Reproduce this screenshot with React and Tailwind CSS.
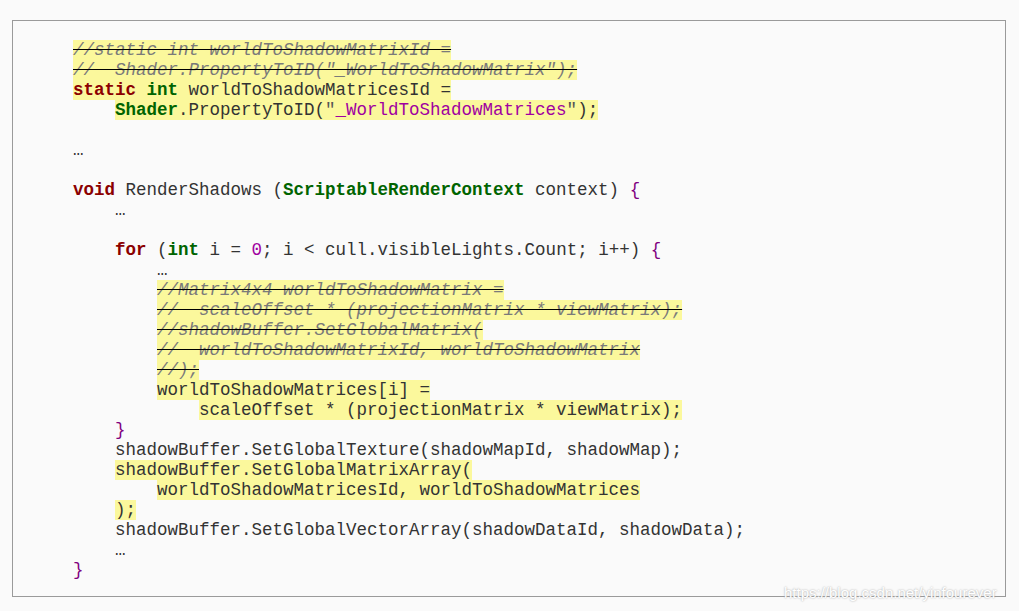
import React from 'react'

// segment kinds: n plain, k keyword, t type, s string, q quote, b brace, c comment
const LINES = [
  { ind: 0, hl: true, segs: [['//static int worldToShadowMatrixId =', 'c']] },
  { ind: 0, hl: true, segs: [['//  Shader.PropertyToID("_WorldToShadowMatrix");', 'c']] },
  { ind: 0, hl: true, segs: [['static', 'k'], [' ', 'n'], ['int', 't'], [' worldToShadowMatricesId =', 'n']] },
  { ind: 1, hl: true, segs: [['Shader', 't'], ['.PropertyToID(', 'n'], ['"', 'q'], ['_WorldToShadowMatrices', 's'], ['"', 'q'], [');', 'n']] },
  { ind: 0, segs: [] },
  { ind: 0, segs: [['…', 'n']] },
  { ind: 0, segs: [] },
  { ind: 0, segs: [['void', 'k'], [' RenderShadows (', 'n'], ['ScriptableRenderContext', 't'], [' context) ', 'n'], ['{', 'b']] },
  { ind: 1, segs: [['…', 'n']] },
  { ind: 0, segs: [] },
  { ind: 1, segs: [['for', 'k'], [' (', 'n'], ['int', 't'], [' i = ', 'n'], ['0', 's'], ['; i < cull.visibleLights.Count; i++) ', 'n'], ['{', 'b']] },
  { ind: 2, segs: [['…', 'n']] },
  { ind: 2, hl: true, segs: [['//Matrix4x4 worldToShadowMatrix =', 'c']] },
  { ind: 2, hl: true, segs: [['//  scaleOffset * (projectionMatrix * viewMatrix);', 'c']] },
  { ind: 2, hl: true, segs: [['//shadowBuffer.SetGlobalMatrix(', 'c']] },
  { ind: 2, hl: true, segs: [['//  worldToShadowMatrixId, worldToShadowMatrix', 'c']] },
  { ind: 2, hl: true, segs: [['//);', 'c']] },
  { ind: 2, hl: true, segs: [['worldToShadowMatrices[i] =', 'n']] },
  { ind: 3, hl: true, segs: [['scaleOffset * (projectionMatrix * viewMatrix);', 'n']] },
  { ind: 1, segs: [['}', 'b']] },
  { ind: 1, segs: [['shadowBuffer.SetGlobalTexture(shadowMapId, shadowMap);', 'n']] },
  { ind: 1, hl: true, segs: [['shadowBuffer.SetGlobalMatrixArray(', 'n']] },
  { ind: 2, hl: true, segs: [['worldToShadowMatricesId, worldToShadowMatrices', 'n']] },
  { ind: 1, hl: true, segs: [[');', 'n']] },
  { ind: 1, segs: [['shadowBuffer.SetGlobalVectorArray(shadowDataId, shadowData);', 'n']] },
  { ind: 1, segs: [['…', 'n']] },
  { ind: 0, segs: [['}', 'b']] },
]

const INDENT = ['pl-0', 'pl-[42px]', 'pl-[84px]', 'pl-[126px]']

const KIND = {
  n: 'text-[#333333]',
  k: 'text-[#8b0000] font-bold',
  t: 'text-[#006400] font-bold',
  s: 'text-[#a000a0]',
  q: 'text-[#555555]',
  b: 'text-[#800080]',
  c: 'text-[#7a7a7a] italic line-through decoration-black',
}

function CodeLine({ line }) {
  return (
    <div className={`h-5 leading-5 whitespace-pre ${INDENT[line.ind]}`}>
      <span className={`inline-block h-5 ${line.hl ? 'bg-[#fbf89c]' : ''}`}>
        {line.segs.map(([text, kind], i) => (
          <span key={i} className={KIND[kind]}>{text}</span>
        ))}
      </span>
    </div>
  )
}

export default function App() {
  return (
    <div className="relative w-[1019px] h-[611px] bg-[#fafafa] pt-5 pl-3 overflow-hidden">
      <div className="w-[994px] h-[577px] border border-[#9a9a9a] pt-[19px] pl-[60px] font-['Liberation_Mono',monospace] text-[17.5px]">
        {LINES.map((line, i) => (
          <CodeLine key={i} line={line} />
        ))}
      </div>

      {/* watermark */}
      <div className="absolute left-[784px] top-[584px] font-['Liberation_Sans',sans-serif] text-[15px] leading-[17px] text-white [text-shadow:0_0_2px_#9a9a9a]">
        https://blog.csdn.net/yinfourever
      </div>
    </div>
  )
}
